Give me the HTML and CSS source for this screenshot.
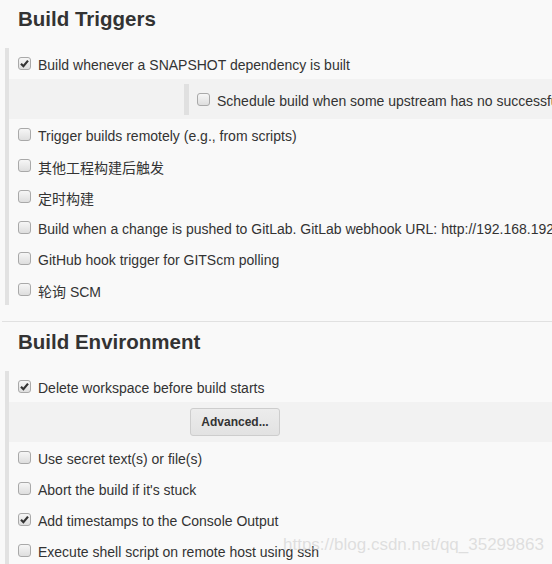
FILE: index.html
```html
<!DOCTYPE html>
<html lang="en">

<head>
    <meta charset="UTF-8">
    <meta name="viewport" content="width=device-width, initial-scale=1.0">
    <title>Configure</title>
    <link rel="stylesheet" href="styles.css">
</head>

<body>

    <div class="page">
        <div class="section">
            <h2 class="title">Build Triggers</h2>
            <div class="group">
                <div class="row">
                    <span class="box checked"><svg viewBox="0 0 13 13" width="13" height="13"><path d="M3 6.8 L5.4 9.2 L10 3.6" /></svg></span>
                    <span>Build whenever a SNAPSHOT dependency is built</span>
                </div>
                <div class="nested">
                    <div class="subgroup">
                        <div class="row">
                            <span class="box"></span>
                            <span>Schedule build when some upstream has no successful builds</span>
                        </div>
                    </div>
                </div>
                <div class="row">
                    <span class="box"></span>
                    <span>Trigger builds remotely (e.g., from scripts)</span>
                </div>
                <div class="row">
                    <span class="box"></span>
                    <span>其他工程构建后触发</span>
                </div>
                <div class="row">
                    <span class="box"></span>
                    <span>定时构建</span>
                </div>
                <div class="row">
                    <span class="box"></span>
                    <span>Build when a change is pushed to GitLab. GitLab webhook URL: http://192.168.192.128:8080/project/demo</span>
                </div>
                <div class="row">
                    <span class="box"></span>
                    <span>GitHub hook trigger for GITScm polling</span>
                </div>
                <div class="row">
                    <span class="box"></span>
                    <span>轮询 SCM</span>
                </div>
            </div>
        </div>

        <div class="divider"></div>

        <div class="section">
            <h2 class="title">Build Environment</h2>
            <div class="group">
                <div class="row">
                    <span class="box checked"><svg viewBox="0 0 13 13" width="13" height="13"><path d="M3 6.8 L5.4 9.2 L10 3.6" /></svg></span>
                    <span>Delete workspace before build starts</span>
                </div>
                <div class="nested buttons">
                    <button class="btn">Advanced...</button>
                </div>
                <div class="row">
                    <span class="box"></span>
                    <span>Use secret text(s) or file(s)</span>
                </div>
                <div class="row">
                    <span class="box"></span>
                    <span>Abort the build if it's stuck</span>
                </div>
                <div class="row">
                    <span class="box checked"><svg viewBox="0 0 13 13" width="13" height="13"><path d="M3 6.8 L5.4 9.2 L10 3.6" /></svg></span>
                    <span>Add timestamps to the Console Output</span>
                </div>
                <div class="row">
                    <span class="box"></span>
                    <span>Execute shell script on remote host using ssh</span>
                </div>
            </div>
        </div>

        <div class="watermark">https://blog.csdn.net/qq_35299863</div>
    </div>

</body>

</html>
```

FILE: styles.css
```css
* {
    margin: 0;
    padding: 0;
    box-sizing: border-box;
}

html,
body {
    width: 100%;
    height: 100%;
    font-family: "Liberation Sans", Arial, "Noto Sans CJK SC", sans-serif;
    background-color: #f9f9f9;
    color: #333;
    overflow: hidden;
}

.page {
    position: relative;
    width: 100%;
    height: 100%;
}

.title {
    padding: 7px 0 0 18px;
    font-size: 20.5px;
    line-height: 24px;
    font-weight: 700;
    color: #333;
    margin-bottom: 17px;
}

.group {
    margin-left: 5px;
    border-left: 4px solid #e2e2e2;
}

.row {
    display: flex;
    align-items: center;
    height: 31px;
    padding: 2px 0 0 9px;
    font-size: 14px;
    white-space: nowrap;
}

.box {
    flex: none;
    width: 13px;
    height: 13px;
    margin-right: 7px;
    margin-top: -3px;
    border: 1px solid #a9a9a9;
    border-radius: 3px;
    background-image: linear-gradient(#f6f6f6, #dedede);
    display: flex;
}

.box svg {
    margin: -1px;
}

.box path {
    fill: none;
    stroke: #333;
    stroke-width: 2.2;
}

.nested {
    background-color: #f2f2f2;
    padding: 5px 0 4px 175px;
}

.subgroup {
    border-left: 5px solid #e0e0e0;
}

.subgroup .row {
    padding-left: 8px;
}

.nested.buttons {
    padding: 6px 0 6px 181px;
}

.btn {
    width: 90px;
    height: 28px;
    border: 1px solid #cdcdcd;
    border-radius: 3px;
    background-image: linear-gradient(#ececec, #e2e2e2);
    font-family: "Liberation Sans", Arial, sans-serif;
    font-size: 12px;
    font-weight: 700;
    color: #333;
}

.divider {
    height: 1px;
    margin: 16px 0 0 2px;
    background-color: #e1e1e1;
}

.section + .divider + .section .title {
    padding-top: 8px;
}

.watermark {
    position: absolute;
    left: 283px;
    top: 535px;
    font-size: 17px;
    color: rgba(200, 200, 200, 0.55);
    white-space: nowrap;
}
```
